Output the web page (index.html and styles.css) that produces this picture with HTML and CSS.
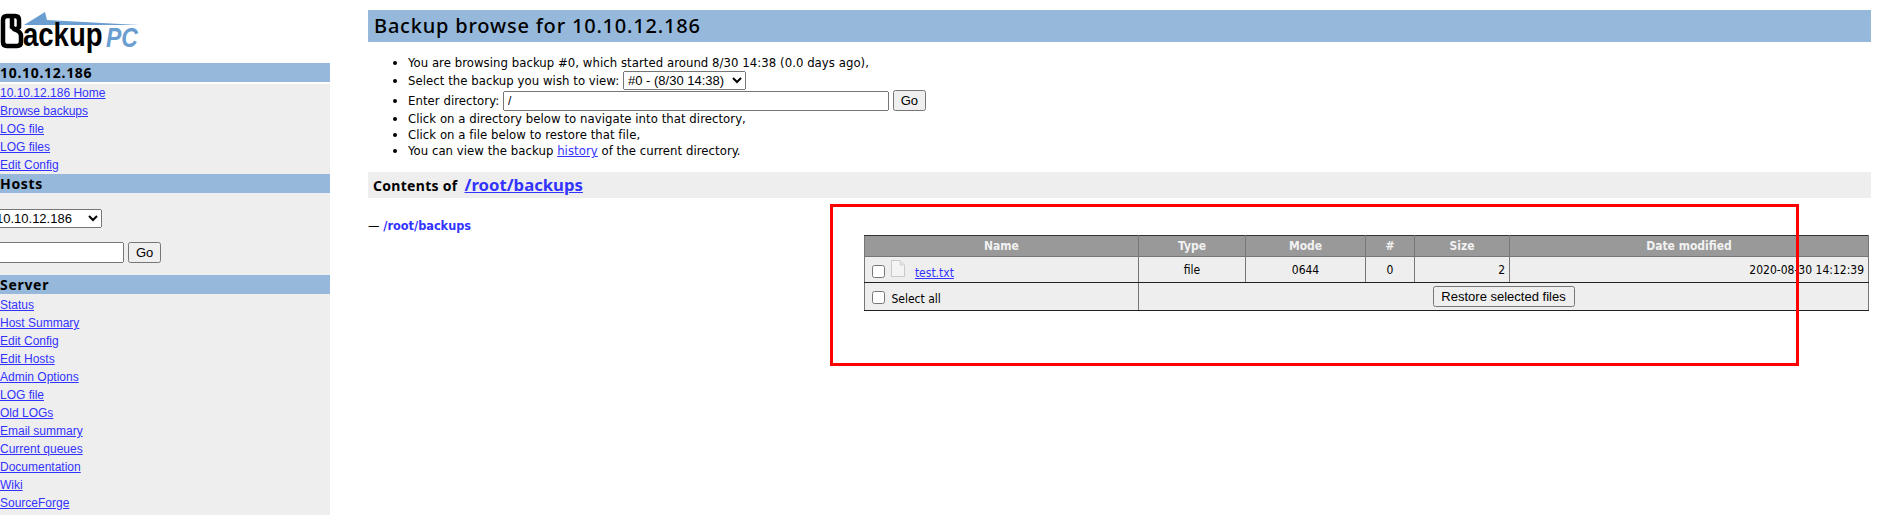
FILE: index.html
```html
<!DOCTYPE html>
<html lang="en">

<head>
    <meta charset="UTF-8">
    <title>BackupPC: Browse backup 0 for 10.10.12.186</title>
    <link rel="stylesheet" href="styles.css">
</head>

<body>
    <div class="page">
        <div class="sidebar">
            <div class="logo">
                <svg width="150" height="63" viewBox="0 0 150 63">
                    <path d="M45 12 L24 25 L139 25 L47 20 Z" fill="#6a9ed0"/>
                    <path d="M3 20 Q3 16 7 16 L15 16 Q19 16 19 20 L19 27 L16 30 Q21 32 21 36 L21 42 Q21 46 17 46 L7 46 Q3 46 3 42 Z M12 17 L12 27 L16 30" fill="none" stroke="#000" stroke-width="4.5"/>
                    <text transform="translate(23 46) scale(.81 1)" class="logo-word">ackup</text>
                    <text transform="translate(106 47) scale(.82 1)" class="logo-pc">PC</text>
                </svg>
            </div>
            <div class="side-head">10.10.12.186</div>
            <div class="side-links first">
                <a href="#">10.10.12.186 Home</a>
                <a href="#">Browse backups</a>
                <a href="#">LOG file</a>
                <a href="#">LOG files</a>
                <a href="#">Edit Config</a>
            </div>
            <div class="side-head">Hosts</div>
            <div class="host-form">
                <select class="host-select">
                    <option>10.10.12.186</option>
                </select>
                <div class="host-search">
                    <input type="text" class="host-input">
                    <button class="btn">Go</button>
                </div>
            </div>
            <div class="side-head">Server</div>
            <div class="side-links last">
                <a href="#">Status</a>
                <a href="#">Host Summary</a>
                <a href="#">Edit Config</a>
                <a href="#">Edit Hosts</a>
                <a href="#">Admin Options</a>
                <a href="#">LOG file</a>
                <a href="#">Old LOGs</a>
                <a href="#">Email summary</a>
                <a href="#">Current queues</a>
                <a href="#">Documentation</a>
                <a href="#">Wiki</a>
                <a href="#">SourceForge</a>
            </div>
        </div>

        <div class="main">
            <h1>Backup browse for 10.10.12.186</h1>
            <ul class="info">
                <li>You are browsing backup #0, which started around 8/30 14:38 (0.0 days ago),</li>
                <li>Select the backup you wish to view:
                    <select class="backup-select">
                        <option>#0 - (8/30 14:38)</option>
                    </select>
                </li>
                <li>Enter directory:
                    <input type="text" class="dir-input" value="/">
                    <button class="btn">Go</button>
                </li>
                <li>Click on a directory below to navigate into that directory,</li>
                <li>Click on a file below to restore that file,</li>
                <li>You can view the backup <a href="#">history</a> of the current directory.</li>
            </ul>
            <h2>Contents of <a href="#">/root/backups</a></h2>
            <div class="browse">
                <div class="tree"><span class="tree-dash">&mdash;</span> <a href="#">/root/backups</a></div>
                <table class="files">
                    <colgroup>
                        <col class="col-name">
                        <col class="col-type">
                        <col class="col-mode">
                        <col class="col-num">
                        <col class="col-size">
                        <col>
                    </colgroup>
                    <tr class="head-row">
                        <th>Name</th>
                        <th>Type</th>
                        <th>Mode</th>
                        <th>#</th>
                        <th>Size</th>
                        <th>Date modified</th>
                    </tr>
                    <tr class="file-row">
                        <td class="name-cell">
                            <input type="checkbox">
                            <svg class="file-icon" width="14" height="17" viewBox="0 0 14 17">
                                <path d="M.5 .5 H9 L13.5 5 V16.5 H.5 Z" fill="#f4f4f4" stroke="#c8c8c8"/>
                                <path d="M9 .5 V5 H13.5" fill="#e4e4e4" stroke="#d4d4d4"/>
                            </svg>
                            <a href="#" class="file-link">test.txt</a>
                        </td>
                        <td class="center">file</td>
                        <td class="center">0644</td>
                        <td class="center">0</td>
                        <td class="right">2</td>
                        <td class="right">2020-08-30 14:12:39</td>
                    </tr>
                    <tr class="foot-row">
                        <td class="name-cell select-cell">
                            <input type="checkbox">
                            <span class="select-all">Select all</span>
                        </td>
                        <td colspan="5" class="center">
                            <button class="btn restore">Restore selected files</button>
                        </td>
                    </tr>
                </table>
            </div>
        </div>
    </div>
    <div class="annotation"></div>
</body>

</html>
```

FILE: styles.css
```css
html,
body {
    margin: 0;
    height: 515px;
    overflow: hidden;
    background-color: #fff;
}

body {
    position: relative;
    font-family: "DejaVu Sans Condensed", "Noto Sans", sans-serif;
    font-size: 12px;
    color: #000;
}

a {
    color: #3333ff;
}

.page {
    display: flex;
    height: 515px;
}

.sidebar {
    width: 330px;
    flex: none;
    display: flex;
    flex-direction: column;
    overflow: hidden;
}

.logo {
    height: 63px;
    flex: none;
}

.logo svg {
    display: block;
}

.logo-word {
    font-family: "Liberation Sans", sans-serif;
    font-weight: bold;
    font-size: 34px;
    fill: #000;
}

.logo-pc {
    font-family: "Liberation Sans", sans-serif;
    font-weight: bold;
    font-style: italic;
    font-size: 28px;
    fill: #6a9ed0;
}

.side-head {
    height: 19px;
    flex: none;
    line-height: 19px;
    background-color: #95b8db;
    font-family: "Noto Sans", sans-serif;
    font-weight: bold;
    font-size: 14px;
    letter-spacing: 0.7px;
}

.side-links {
    padding-top: 2px;
    background-color: #eeeeee;
}

.side-links.first {
    margin-top: 2px;
    padding-top: 0;
}

.side-links.last {
    flex: 1;
}

.side-links a {
    display: block;
    height: 18px;
    line-height: 18px;
    font-family: "Liberation Sans", sans-serif;
    font-size: 12px;
}

.host-form {
    height: 82px;
    flex: none;
    padding-top: 16px;
    box-sizing: border-box;
    background-color: #eeeeee;
}

.host-select {
    display: block;
    width: 111px;
    height: 19px;
    margin-left: -9px;
    font-family: "Liberation Sans", sans-serif;
    font-size: 13px;
}

.host-search {
    display: flex;
    align-items: flex-start;
    gap: 4px;
    margin-top: 14px;
}

.host-input {
    width: 134px;
    height: 21px;
    margin-left: -10px;
    padding: 0;
    box-sizing: border-box;
    flex: none;
}

.btn {
    height: 21px;
    padding: 0 6px;
    font-family: "Liberation Sans", sans-serif;
    font-size: 13px;
}

.main {
    width: 1503px;
    margin-left: 38px;
    flex: none;
}

h1 {
    margin: 10px 0 0;
    height: 32px;
    line-height: 31px;
    padding-left: 6px;
    background-color: #95b8db;
    font-family: "Noto Sans", sans-serif;
    font-size: 20px;
    font-weight: 500;
    letter-spacing: 0.8px;
}

.info {
    margin: 13px 0 0;
    padding-left: 40px;
    list-style: disc;
    line-height: 16px;
    font-size: 13px;
    letter-spacing: 0.05px;
}

.info li {
    height: 16px;
}

.info li:nth-child(2) {
    height: 19px;
}

.info li:nth-child(3) {
    height: 21px;
}

.backup-select {
    width: 123px;
    height: 19px;
    font-family: "Liberation Sans", sans-serif;
    font-size: 13px;
}

.dir-input {
    width: 386px;
    height: 20px;
    padding: 0 3px;
    box-sizing: border-box;
    font-size: 12px;
    font-family: "Liberation Sans", sans-serif;
}

h2 {
    margin: 13px 0 0;
    height: 26px;
    line-height: 26px;
    padding-left: 5px;
    background-color: #eeeeee;
    font-family: "Noto Sans", sans-serif;
    font-size: 14px;
    font-weight: bold;
    letter-spacing: 0.3px;
}

h2 a {
    font-size: 16.7px;
    letter-spacing: 0;
    margin-left: 3px;
}

.browse {
    display: flex;
    justify-content: space-between;
    align-items: flex-start;
    padding-right: 2px;
}

.tree {
    margin-top: 20px;
    font-size: 12.6px;
    font-weight: bold;
}

.tree a {
    text-decoration: none;
}

.tree-dash {
    font-weight: normal;
}

.files {
    width: 1005px;
    margin-top: 37px;
    border-collapse: collapse;
    table-layout: fixed;
    font-size: 12px;
}

.col-name {
    width: 274px;
}

.col-type {
    width: 107px;
}

.col-mode {
    width: 120px;
}

.col-num {
    width: 49px;
}

.col-size {
    width: 95px;
}

.files th,
.files td {
    padding: 0 4px;
    border: 1px solid #777;
}

.files th {
    height: 20px;
    background-color: #999999;
    color: #f2f2f2;
    font-family: "DejaVu Sans Condensed", "Liberation Sans", sans-serif;
    font-weight: bold;
    font-size: 12px;
    border-top-color: #333;
}

.files td {
    background-color: #eeeeee;
    border-bottom-color: #222;
}

.file-row td {
    height: 25px;
}

.foot-row td {
    height: 27px;
}

.center {
    text-align: center;
}

.right {
    text-align: right;
}

.name-cell input {
    margin: 0 3px 0 3px;
    vertical-align: -1px;
}

.file-icon {
    margin-right: 6px;
}

.files td.select-cell {
    height: 24px;
    padding-top: 3px;
}

.restore {
    height: 21px;
    width: 142px;
    padding: 0;
}

.annotation {
    position: absolute;
    left: 830px;
    top: 204px;
    width: 969px;
    height: 162px;
    box-sizing: border-box;
    border: 3px solid #ff0000;
}
```
